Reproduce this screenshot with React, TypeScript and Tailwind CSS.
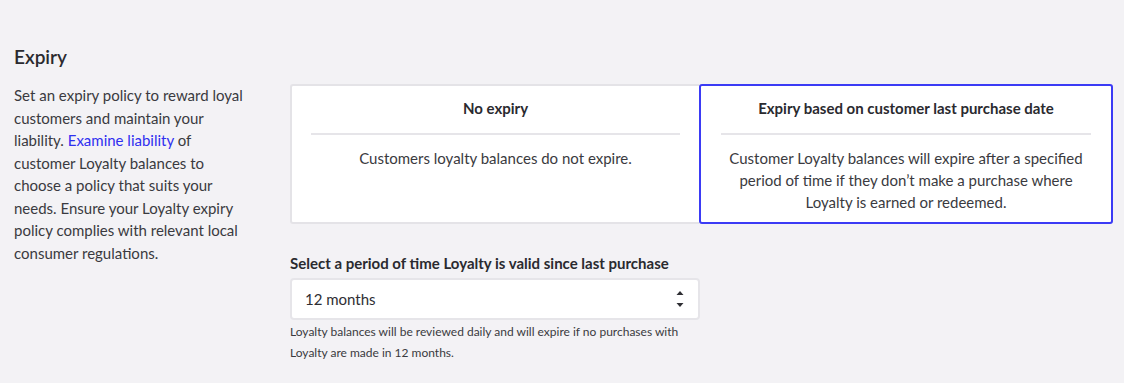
export default function App() {
  return (
    <div
      className="min-h-[383px] w-full bg-[#f3f2f5] px-[14px] pt-[45px] text-[#2e2e33]"
      style={{ fontFamily: "Lato, 'Open Sans', sans-serif" }}
    >
      <h2 className="text-[19px] font-semibold leading-[24px] text-[#2a2a2f]">Expiry</h2>

      <div className="mt-[15px] flex">
        {/* left description */}
        <div className="w-[240px] shrink-0 text-[15px] leading-[22.5px] text-[#3a3a40]">
          Set an expiry policy to reward loyal customers and maintain your liability.{" "}
          <a href="#" className="text-[#2f2ff0]">
            Examine liability
          </a>{" "}
          of customer Loyalty balances to choose a policy that suits your needs. Ensure your Loyalty
          expiry policy complies with relevant local consumer regulations.
        </div>

        {/* right options */}
        <div className="ml-[36px] flex flex-col">
          <div className="flex h-[140px] w-[823px]">
            <div className="flex w-[409px] flex-col rounded-l-[3px] border-2 border-r-0 border-[#e4e3e7] bg-white px-[19px] pt-[11px] text-center">
              <div className="text-[15px] font-bold leading-[22px] text-[#2a2a2f]">No expiry</div>
              <div className="mt-[14px] h-[2px] bg-[#e6e5e9]" />
              <p className="mt-[12px] text-[15px] leading-[22px] text-[#3a3a40]">
                Customers loyalty balances do not expire.
              </p>
            </div>
            <div className="flex w-[414px] flex-col rounded-[3px] border-2 border-[#3b3bf5] bg-white px-[20px] pt-[11px] text-center">
              <div className="text-[15px] font-bold leading-[22px] text-[#2a2a2f]">
                Expiry based on customer last purchase date
              </div>
              <div className="mt-[14px] h-[2px] bg-[#e6e5e9]" />
              <p className="mt-[12px] px-[8px] text-[15px] leading-[22px] text-[#3a3a40]">
                Customer Loyalty balances will expire after a specified period of time if they
                don’t make a purchase where Loyalty is earned or redeemed.
              </p>
            </div>
          </div>

          <label className="mt-[28px] text-[15px] font-bold leading-[22px] text-[#2a2a2f]">
            Select a period of time Loyalty is valid since last purchase
          </label>
          <div className="mt-[4px] flex h-[42px] w-[410px] items-center justify-between rounded-[4px] border-2 border-[#e6e5e9] bg-white pl-[13px] pr-[14px]">
            <span className="text-[15px] text-[#2e2e33]">12 months</span>
            <svg width="8" height="18" viewBox="0 0 8 18" className="text-[#2e2e33]">
              <path d="M4 1 L7.5 5 L0.5 5 Z" fill="currentColor" />
              <path d="M0.5 13 L7.5 13 L4 17 Z" fill="currentColor" />
            </svg>
          </div>
          <p className="mt-[1px] w-[410px] text-[12px] leading-[21px] text-[#3a3a40]">
            Loyalty balances will be reviewed daily and will expire if no purchases with Loyalty
            are made in 12 months.
          </p>
        </div>
      </div>
    </div>
  );
}
